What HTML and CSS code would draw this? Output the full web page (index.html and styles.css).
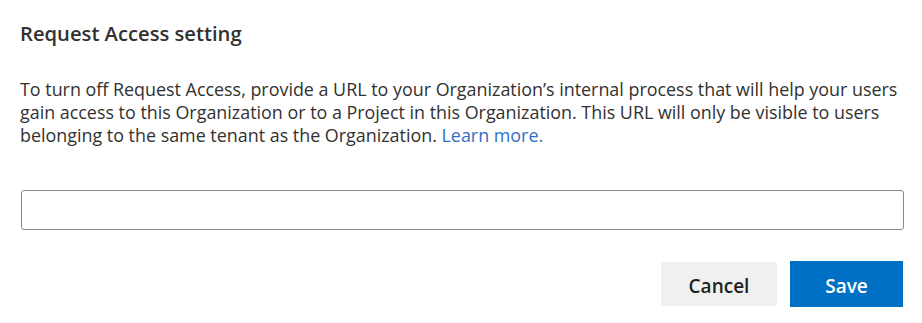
FILE: index.html
```html
<!DOCTYPE html>
<html lang="en">
<head>
  <meta charset="UTF-8"/>
  <title>Request Access setting</title>
  <link rel="stylesheet" href="styles.css">
</head>
<body>
  <div class="dialog">
    <h2 class="title">Request Access setting</h2>
    <p class="desc">To turn off Request Access, provide a URL to your Organization’s internal process that will help your users gain access to this Organization or to a Project in this Organization. This URL will only be visible to users belonging to the same tenant as the Organization. <a href="#" class="link">Learn more.</a></p>
    <input type="text" class="url-input">
    <div class="actions">
      <button class="btn btn-cancel">Cancel</button>
      <button class="btn btn-save">Save</button>
    </div>
  </div>
</body>
</html>
```

FILE: styles.css
```css
body {
  margin: 0;
  background: #fff;
  font-family: "Open Sans", "Noto Sans", sans-serif;
  color: #333;
}
.dialog {
  padding: 19px 14px 0 20px;
}
.title {
  margin: 0;
  font-size: 20.2px;
  font-weight: 600;
  line-height: 28px;
  color: #323130;
}
.desc {
  margin: 31px 0 0;
  font-size: 17.9px;
  line-height: 23px;
  color: #323130;
}
.link {
  display: inline-block;
  line-height: 23px;
  color: #2f6fc6;
  text-decoration: none;
}
.url-input {
  display: block;
  box-sizing: border-box;
  width: 883px;
  height: 40px;
  margin: 43px 0 0 1px;
  border: 1px solid #8a8886;
  border-radius: 3px;
  font: inherit;
}
.actions {
  display: flex;
  justify-content: flex-end;
  align-items: flex-start;
  gap: 13px;
  margin-top: 31px;
  padding-right: 5px;
}
.btn {
  border: none;
  font-family: inherit;
  font-size: 19px;
  font-weight: 600;
  cursor: pointer;
  padding: 4px 0 0;
}
.btn-cancel {
  width: 116px;
  height: 44px;
  margin-top: 1px;
  background: #f0f0f0;
  color: #201f1e;
  border-radius: 2px;
}
.btn-save {
  width: 113px;
  height: 46px;
  background: #0070c4;
  color: #fff;
}
```
